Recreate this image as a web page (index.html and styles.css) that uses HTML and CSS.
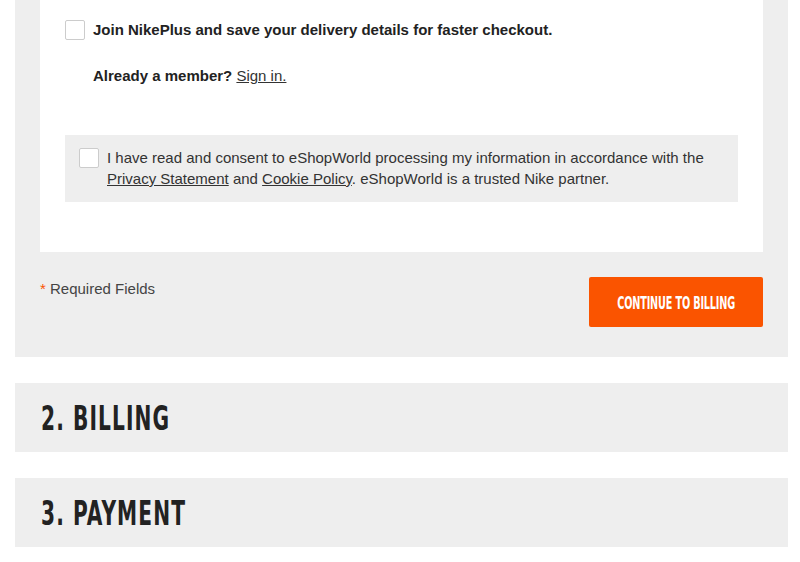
FILE: index.html
```html
<!DOCTYPE html>
<html lang="en">
<head>
  <meta charset="UTF-8">
  <title>Checkout</title>
  <link rel="stylesheet" href="styles.css">
</head>
<body>
  <div class="shipping">
    <div class="card">
      <label class="check-row">
        <span class="box"></span>
        <span class="join">Join NikePlus and save your delivery details for faster checkout.</span>
      </label>
      <p class="member">Already a member? <a href="#">Sign in.</a></p>

      <div class="consent">
        <span class="box"></span>
        <p>I have read and consent to eShopWorld processing my information in accordance with the
          <a href="#">Privacy Statement</a> and <a href="#">Cookie Policy</a>. eShopWorld is a trusted Nike partner.</p>
      </div>
    </div>

    <div class="footer">
      <p class="required"><span class="star">*</span> Required Fields</p>
      <button class="continue-btn"><span>CONTINUE TO BILLING</span></button>
    </div>
  </div>

  <div class="step"><h2><span>2. BILLING</span></h2></div>
  <div class="step"><h2><span>3. PAYMENT</span></h2></div>
</body>
</html>
```

FILE: styles.css
```css
body {
  margin: 0;
  background: #fff;
  font-family: 'Liberation Sans', Arial, sans-serif;
  color: #333;
}

.shipping {
  background: #eee;
  margin: 0 12px 0 15px;
  padding: 0 25px;
}

.card {
  background: #fff;
  padding: 20px 25px 50px;
}

.check-row {
  display: flex;
  align-items: flex-start;
  gap: 8px;
}

.box {
  flex: none;
  width: 18px;
  height: 18px;
  border: 1px solid #ccc;
  border-radius: 2px;
  background: #fff;
}

.join {
  font-size: 15px;
  font-weight: bold;
  line-height: 20px;
  color: #222;
}

.member {
  margin: 26px 0 0 28px;
  font-size: 15px;
  font-weight: bold;
  line-height: 20px;
  color: #222;
}

.member a {
  font-weight: normal;
  color: #333;
}

.consent {
  display: flex;
  align-items: flex-start;
  gap: 8px;
  background: #eee;
  margin-top: 49px;
  padding: 13px 14px 13px;
}

.consent p {
  margin: -1px 0 0;
  font-size: 15px;
  line-height: 21px;
  color: #333;
}

.consent a {
  color: #333;
}

.footer {
  display: flex;
  justify-content: space-between;
  align-items: flex-start;
  padding: 25px 0 30px;
}

.required {
  margin: 2px 0 0;
  font-size: 15px;
  line-height: 20px;
  color: #444;
}

.star {
  color: #fa5400;
}

.continue-btn {
  display: flex;
  justify-content: center;
  align-items: center;
  width: 174px;
  height: 50px;
  border: none;
  border-radius: 2px;
  background: #fa5400;
  color: #fff;
  font-family: 'Liberation Sans Narrow', 'DejaVu Sans Condensed', sans-serif;
  font-weight: bold;
  font-size: 18px;
  padding: 0;
  white-space: nowrap;
  cursor: pointer;
}

.continue-btn span {
  flex: none;
  letter-spacing: -0.3px;
  transform: scaleX(0.6);
}

.step {
  background: #eee;
  margin: 26px 12px 0 15px;
  height: 69px;
  display: flex;
  align-items: center;
  padding-left: 26px;
}

.step h2 {
  margin: 2px 0 0;
  font-family: 'Liberation Sans Narrow', 'DejaVu Sans Condensed', sans-serif;
  font-weight: bold;
  font-size: 33px;
  color: #222;
  white-space: nowrap;
}

.step h2 span {
  display: inline-block;
  letter-spacing: 1.6px;
  transform: scaleX(0.68);
  transform-origin: left center;
}
```
